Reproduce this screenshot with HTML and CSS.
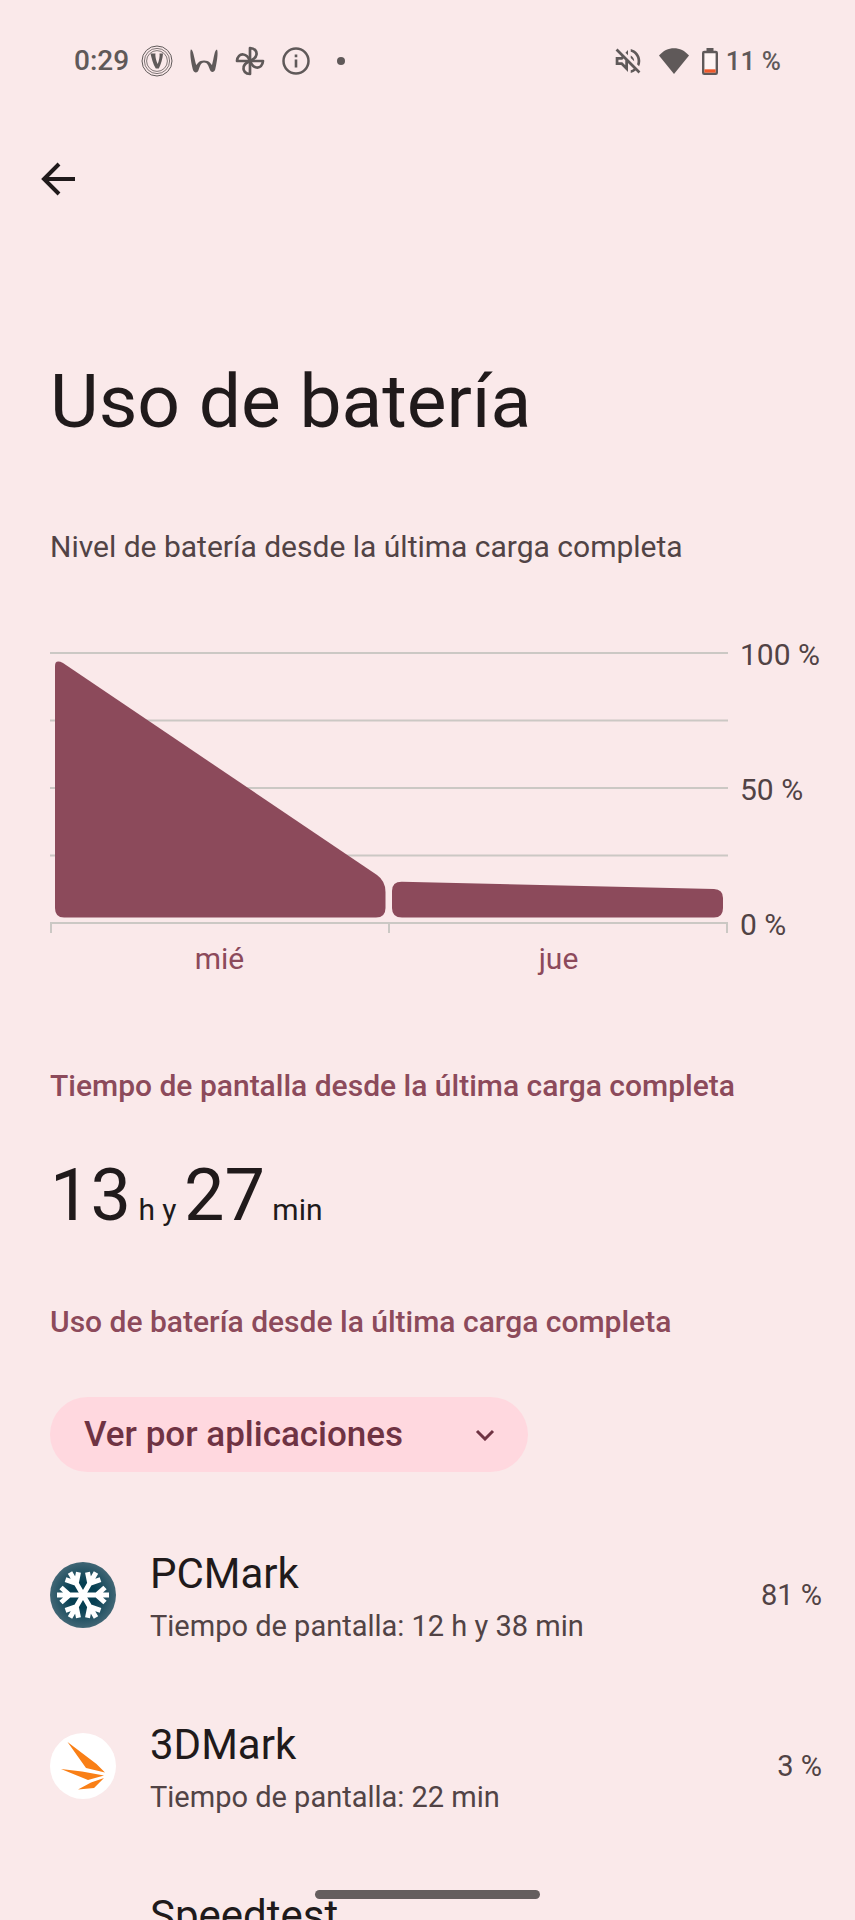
FILE: index.html
```html
<!DOCTYPE html>
<html lang="es">
<head>
<meta charset="utf-8">
<meta name="viewport" content="width=device-width, initial-scale=1">
<title>Uso de batería</title>
<link rel="stylesheet" href="styles.css">
</head>
<body>
<div class="screen">
  <header class="status">
    <div class="status-left">
      <span class="clock">0:29</span>
      <svg class="ico-v" viewBox="0 0 32 32" aria-hidden="true"><g fill="none" stroke="currentColor"><circle cx="16" cy="16" r="15"/><circle cx="16" cy="16" r="12.600" stroke-width=".8"/><circle cx="16" cy="16" r="10.400" stroke-width=".8"/></g><path d="M9.500 8.500h5c-.6 2 .8 7.500 2.200 10.500C18 16 19 11 18.500 8.500H22c-.3 5-2.200 11-4.200 15h-3C12 19 10.500 13 9.500 8.500z" fill="currentColor"/></svg>
      <svg class="ico-w" viewBox="0 0 28 24" aria-hidden="true"><path d="M.8.500C3 0 4 8 6.200 16 8 14.500 8.500 11.500 14 11.500s6.500 3 8 4.500C24 9 24.500.500 27 .500c1.500 3-.4 14.500-1.800 20-.8 3-4.200 3.300-5.200.5C18.500 17 17.500 13.500 14 13.500S10 17.500 8.400 21.500C7.400 24.200 4 24 3 21 1.500 16-.6 4 .8.500z" fill="currentColor"/></svg>
      <svg class="ico-fan" viewBox="0 0 30 30" aria-hidden="true"><g fill="none" stroke="currentColor" stroke-width="2.700" stroke-linejoin="round"><path d="M15 15V2c4.500.3 7 3 6.500 6.500-.3 2.500-2.500 4.800-6.500 6.500z"/><path d="M15 15h13c-.3 4.500-3 7-6.500 6.500-2.500-.3-4.800-2.500-6.500-6.500z"/><path d="M15 15v13c-4.500-.3-7-3-6.500-6.500.3-2.500 2.500-4.800 6.500-6.500z"/><path d="M15 15H2c.3-4.500 3-7 6.500-6.500 2.500.3 4.800 2.500 6.500 6.500z"/></g></svg>
      <svg class="ico-info" viewBox="0 0 28 28" aria-hidden="true"><circle cx="14" cy="14" r="12.500" fill="none" stroke="currentColor" stroke-width="2.500"/><path d="M12.700 12.500h2.600v8h-2.600zM12.700 7.500h2.600v2.800h-2.600z" fill="currentColor"/></svg>
      <span class="dot"></span>
    </div>
    <div class="status-right">
      <svg class="ico-mute" viewBox="2.500 2.500 19 19" aria-hidden="true"><path d="M4.340 2.930 2.930 4.340 7.290 8.700 7 9H3v6h4l5 5v-6.590l4.180 4.180c-.65.49-1.380.88-2.180 1.110v2.060c1.340-.3 2.570-.92 3.610-1.750l2.050 2.050 1.410-1.410zM10 15.170 7.830 13H5v-2h2.830l.88-.88L10 11.410zM19 12c0 .82-.15 1.610-.41 2.340l1.530 1.530c.56-1.170.88-2.480.88-3.870 0-4.280-2.990-7.860-7-8.770v2.060c2.890.86 5 3.540 5 6.710zm-7-8-1.880 1.880L12 7.760zm4.500 8c0-1.770-1.020-3.290-2.500-4.030v1.790l2.480 2.480c.01-.08.020-.16.020-.24z" fill="currentColor"/></svg>
      <svg class="ico-wifi" viewBox="0 0 30 26" aria-hidden="true"><path d="M15 26 0 7.500C8-2.300 22-2.300 30 7.500z" fill="currentColor"/></svg>
      <svg class="ico-bat" viewBox="0 0 16 27" aria-hidden="true"><path d="M4.500 0h7v3h-7z" fill="currentColor"/><rect x="1.200" y="4" width="13.600" height="21.800" rx="1" fill="#fff4f3" stroke="currentColor" stroke-width="2.400"/><path d="M2.400 21.300h11.200v3.300H2.400z" fill="#f0592b"/></svg>
      <span class="level">11 %</span>
    </div>
  </header>

  <main class="content">
    <button class="back" type="button" aria-label="Atrás">
      <svg viewBox="0 0 34 34" aria-hidden="true"><path d="M18 2 3 17l15 15M3 17h31" fill="none" stroke="currentColor" stroke-width="4"/></svg>
    </button>
    <h1 class="title">Uso de batería</h1>
    <p class="subtitle">Nivel de batería desde la última carga completa</p>

    <section class="chart" aria-label="Nivel de batería">
      <svg class="plot" viewBox="0 0 678 281" aria-hidden="true">
        <path d="M0 1h678M0 68.500h678M0 136h678M0 203.500h678M0 271h678M1 271v10M339 271v10M677 271v10" fill="none" stroke="#cbc8c4" stroke-width="2"/>
        <path d="M5 256V14Q5 7 13 11L327 223Q335.500 229 335.500 240V256Q335.500 265.500 326 265.500H14Q5 265.500 5 256Z" fill="#8c4a5b"/>
        <path d="M342 256V239Q342 229.500 352 229.700L664 237Q673 237.500 673 246V256Q673 265.500 664 265.500H352Q342 265.500 342 256Z" fill="#8c4a5b"/>
      </svg>
      <div class="y-axis"><span>100 %</span><span>50 %</span><span>0 %</span></div>
      <div class="x-axis"><span>mié</span><span>jue</span></div>
    </section>

    <h2 class="section-title">Tiempo de pantalla desde la última carga completa</h2>
    <p class="duration"><span class="num">13</span> h y <span class="num">27</span> min</p>
    <h2 class="section-title">Uso de batería desde la última carga completa</h2>

    <label class="picker">
      <select aria-label="Agrupar uso"><option>Ver por aplicaciones</option><option>Ver por sistemas</option></select>
      <svg viewBox="0 0 20 12" aria-hidden="true"><path d="m2 2 8 8 8-8" fill="none" stroke="currentColor" stroke-width="3"/></svg>
    </label>

    <ul class="apps">
      <li class="app">
        <svg class="app-icon" viewBox="0 0 66 66" aria-hidden="true">
          <defs><radialGradient id="ice"><stop offset=".4" stop-color="#063f52"/><stop offset="1" stop-color="#416675"/></radialGradient>
          <g id="arm"><path d="M33 33V7M33 19.500 25.500 11M33 19.500l7.500-8.500" transform="rotate(90 33 33)"/></g></defs>
          <circle cx="33" cy="33" r="33" fill="url(#ice)"/>
          <g fill="none" stroke="#fff" stroke-width="5"><use href="#arm"/><use href="#arm" transform="rotate(60 33 33)"/><use href="#arm" transform="rotate(120 33 33)"/><use href="#arm" transform="rotate(180 33 33)"/><use href="#arm" transform="rotate(240 33 33)"/><use href="#arm" transform="rotate(300 33 33)"/></g>
        </svg>
        <div class="app-text"><span class="app-name">PCMark</span><span class="app-sub">Tiempo de pantalla: 12 h y 38 min</span></div>
        <span class="app-pct">81 %</span>
      </li>
      <li class="app">
        <svg class="app-icon" viewBox="0 0 66 66" aria-hidden="true"><circle cx="33" cy="33" r="33" fill="#fff"/><path d="M17.500 9 46.500 31 55 39.500 36 35zM11 36l21 2.500L54 42.500 38 47zM54 45 44 55l-16 1.500 13-7z" fill="#f97f16"/></svg>
        <div class="app-text"><span class="app-name">3DMark</span><span class="app-sub">Tiempo de pantalla: 22 min</span></div>
        <span class="app-pct">3 %</span>
      </li>
      <li class="app">
        <span class="app-icon"></span>
        <div class="app-text"><span class="app-name">Speedtest</span></div>
      </li>
    </ul>
  </main>
  <div class="home-bar"></div>
</div>
</body>
</html>
```
FILE: styles.css
```css
* { box-sizing: border-box; margin: 0; padding: 0; }

body {
  background: #fae9ea;
  color: #201a1b;
  font-family: Roboto, "Noto Sans", sans-serif;
  font-size: 30px;
}

.screen {
  position: relative;
  display: flex;
  flex-direction: column;
  height: 100vh;
  overflow: hidden;
}

svg { display: block; flex: none; }

.status {
  display: flex;
  justify-content: space-between;
  padding: 41px 74px 0 74px;
  color: #5f5959;
  font-size: 28px;
  font-weight: 500;
  line-height: 40px;
}
.status-left, .status-right { display: flex; align-items: center; }
.status-left { gap: 17px; }
.clock { width: 50px; white-space: nowrap; }
.ico-v { width: 32px; height: 32px; }
.ico-w { width: 28px; height: 24px; }
.ico-fan { width: 30px; height: 30px; }
.ico-info { width: 28px; height: 28px; }
.dot { width: 8px; height: 8px; margin-left: 10px; border-radius: 50%; background: currentColor; }
.ico-mute { width: 26px; height: 26px; margin-right: 18px; }
.ico-wifi { width: 30px; height: 26px; margin-right: 13px; }
.ico-bat { width: 16px; height: 27px; margin-right: 8px; }
.level { font-size: 26px; }

.content { flex: 1; min-height: 0; padding: 0 33px 0 50px; overflow: hidden; }

.back {
  display: block;
  margin: 73px 0 0 -17px;
  padding: 8px;
  border: 0;
  background: none;
  color: #201a1b;
}
.back svg { width: 34px; height: 34px; }

.title { margin-top: 151px; font-size: 75px; font-weight: 400; line-height: 92px; }
.subtitle { margin-top: 80px; color: #514345; line-height: 40px; }

.chart { display: grid; grid-template-columns: 1fr 82px; column-gap: 12px; margin-top: 85px; }
.plot { width: 100%; height: auto; }
.y-axis {
  display: flex;
  flex-direction: column;
  justify-content: space-between;
  margin: -17px 0 -12px;
  color: #514345;
  line-height: 40px;
  white-space: nowrap;
}
.x-axis { display: grid; grid-template-columns: 1fr 1fr; margin-top: 6px; color: #8c4a5b; line-height: 40px; text-align: center; }

.section-title { margin-top: 87px; color: #8c4a5b; font-size: 30px; font-weight: 500; line-height: 40px; }
.duration { margin-top: 44px; line-height: 92px; }
.duration .num { font-size: 72px; }
.duration + .section-title { margin-top: 46px; }

.picker {
  display: grid;
  align-items: center;
  width: 478px;
  max-width: 100%;
  height: 75px;
  margin-top: 55px;
  border-radius: 38px;
  background: #ffd8df;
  color: #6f3343;
}
.picker > * { grid-area: 1 / 1; }
.picker select {
  width: 100%;
  height: 100%;
  padding: 0 34px;
  border: 0;
  border-radius: 38px;
  background: none;
  color: inherit;
  font: 500 35px/40px Roboto, "Noto Sans", sans-serif;
  appearance: none;
}
.picker svg { justify-self: end; width: 20px; height: 12px; margin-right: 33px; pointer-events: none; }

.apps { margin-top: 37px; list-style: none; }
.app { display: flex; align-items: center; gap: 34px; height: 171px; }
.app-icon { flex: none; width: 66px; height: 66px; }
.app-text { display: flex; flex: 1; flex-direction: column; height: 96px; }
.app-name { font-size: 42px; line-height: 54px; }
.app-sub { margin-top: 4px; color: #514345; font-size: 29px; line-height: 42px; }
.app-pct { color: #514345; font-size: 29px; }

.home-bar {
  position: absolute;
  bottom: 21px;
  left: 50%;
  width: 225px;
  height: 9px;
  margin-left: -113px;
  border-radius: 5px;
  background: #655e5e;
}
```
